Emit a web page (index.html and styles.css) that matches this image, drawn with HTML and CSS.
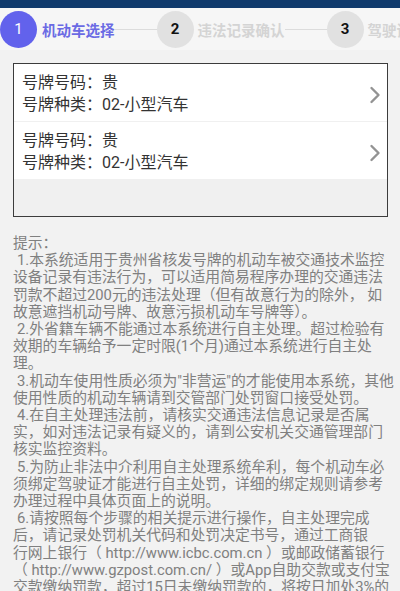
FILE: index.html
```html
<!DOCTYPE html>
<html lang="zh-CN">
<head>
  <meta charset="UTF-8">
  <title>机动车选择</title>
  <link rel="stylesheet" href="styles.css">
</head>
<body>
  <div class="top-bar"></div>

  <!-- step indicator -->
  <div class="steps">
    <div class="step-num active">1</div>
    <div class="step-label active">机动车选择</div>
    <div class="step-line"></div>
    <div class="step-num">2</div>
    <div class="step-label">违法记录确认</div>
    <div class="step-line"></div>
    <div class="step-num">3</div>
    <div class="step-label">驾驶证绑定</div>
  </div>

  <div class="car-list">
    <div class="car-row">
      <div class="car-info">
        <div>号牌号码：贵</div>
        <div>号牌种类：02-小型汽车</div>
      </div>
      <svg class="chevron" width="12" height="18" viewBox="0 0 12 18">
        <path d="M2.5 2 L9.5 9 L2.5 16" fill="none" stroke="#939393" stroke-width="2.4" stroke-linecap="round" stroke-linejoin="round"/>
      </svg>
    </div>
    <div class="car-row">
      <div class="car-info">
        <div>号牌号码：贵</div>
        <div>号牌种类：02-小型汽车</div>
      </div>
      <svg class="chevron" width="12" height="18" viewBox="0 0 12 18">
        <path d="M2.5 2 L9.5 9 L2.5 16" fill="none" stroke="#939393" stroke-width="2.4" stroke-linecap="round" stroke-linejoin="round"/>
      </svg>
    </div>
    <div class="car-empty"></div>
  </div>

  <!-- line breaks follow the app's own wrapping -->
  <div class="tips">
    <p>提示：</p>
    <p class="tip-item">1.本系统适用于贵州省核发号牌的机动车被交通技术监控<br>设备记录有违法行为，可以适用简易程序办理的交通违法<br>罚款不超过200元的违法处理（但有故意行为的除外， 如<br>故意遮挡机动号牌、故意污损机动车号牌等）。</p>
    <p class="tip-item">2.外省籍车辆不能通过本系统进行自主处理。超过检验有<br>效期的车辆给予一定时限(1个月)通过本系统进行自主处<br>理。</p>
    <p class="tip-item">3.机动车使用性质必须为"非营运"的才能使用本系统，其他<br>使用性质的机动车辆请到交管部门处罚窗口接受处罚。</p>
    <p class="tip-item">4.在自主处理违法前，请核实交通违法信息记录是否属<br>实，如对违法记录有疑义的，请到公安机关交通管理部门<br>核实监控资料。</p>
    <p class="tip-item">5.为防止非法中介利用自主处理系统牟利，每个机动车必<br>须绑定驾驶证才能进行自主处罚，详细的绑定规则请参考<br>办理过程中具体页面上的说明。</p>
    <p class="tip-item">6.请按照每个步骤的相关提示进行操作，自主处理完成<br>后，请记录处罚机关代码和处罚决定书号，通过工商银<br>行网上银行（ http://www.icbc.com.cn ）或邮政储蓄银行<br>（ http://www.gzpost.com.cn/ ）或App自助交款或支付宝<br>交款缴纳罚款，超过15日未缴纳罚款的，将按日加处3%的<br>罚款。</p>
  </div>
</body>
</html>
```

FILE: styles.css
```css
html, body {
  margin: 0;
  padding: 0;
  background: #f2f2f2;
  font-family: Roboto, "Noto Sans CJK SC", sans-serif;
  overflow: hidden;
}

.top-bar {
  height: 8px;
  background: #103a6c;
}

.steps {
  display: flex;
  align-items: center;
  height: 42px;
  background: #f6f6f6;
  white-space: nowrap;
  overflow: hidden;
}

.step-num {
  flex: none;
  width: 37px;
  height: 37px;
  border-radius: 50%;
  background: #e1e1e1;
  color: #111;
  font-size: 15px;
  font-weight: bold;
  display: flex;
  align-items: center;
  justify-content: center;
}

.step-num.active {
  background: #6262ec;
  color: #fff;
  font-weight: normal;
}

.step-label {
  flex: none;
  margin-left: 4px;
  font-size: 14.5px;
  font-weight: bold;
  color: #d4d4d4;
}

.step-label.active {
  color: #6b6be4;
  margin-left: 5px;
}

.step-line {
  flex: none;
  width: 42px;
  height: 1px;
  background: #dcdcdc;
}

.car-list {
  margin: 13px 12px 0 13px;
  border: 1.5px solid #3c3c3c;
  background: #f0f0f0;
}

.car-row {
  display: flex;
  align-items: center;
  background: #fff;
  padding: 8px 6px 5px 8px;
  border-bottom: 1px solid #f0f0f0;
  color: #333;
  font-size: 16px;
  line-height: 22px;
}

.car-info {
  flex: 1;
}

.chevron {
  display: block;
  margin-top: 2px;
}

.car-empty {
  height: 36px;
}

.tips {
  padding: 18px 0 0 13px;
  color: #808080;
  font-size: 14.8px;
  line-height: 17.2px;
  white-space: nowrap;
}

.tips p {
  margin: 0;
}

.tip-item {
  text-indent: 4px;
}
```
